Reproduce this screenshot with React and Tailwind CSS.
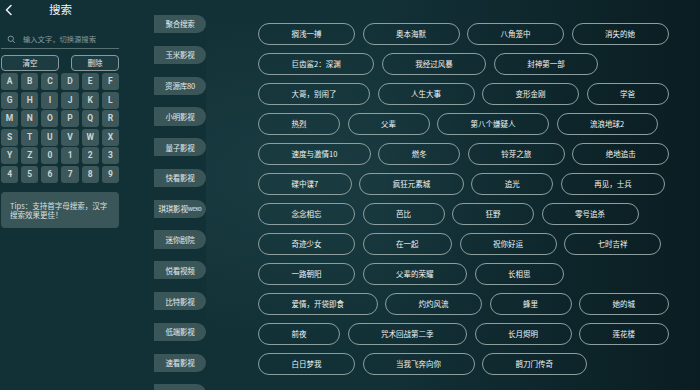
import React from "react";

const FONT = { fontFamily: '"Noto Sans CJK SC", "Noto Sans", sans-serif' };

const keys = "ABCDEFGHIJKLMNOPQRSTUVWXYZ0123456789".split("");

const sources = [
  "聚合搜索",
  "玉米影视",
  "资源库80",
  "小明影视",
  "量子影视",
  "快看影视",
  "琪琪影视wexo",
  "迷你剧院",
  "悦看视频",
  "比特影视",
  "低端影视",
  "速看影视",
  "",
];

const rows = [
  ["搁浅一搏", "奥本海默", "八角笼中", "消失的她"],
  ["巨齿鲨2：深渊", "我经过风暴", "封神第一部"],
  ["大哥，别闹了", "人生大事", "变形金刚", "学爸"],
  ["热烈", "父辈", "第八个嫌疑人", "流浪地球2"],
  ["速度与激情10", "燃冬", "铃芽之旅", "绝地追击"],
  ["碟中谍7", "疯狂元素城", "追光", "再见，士兵"],
  ["念念相忘", "芭比", "狂野", "零号追杀"],
  ["奇迹少女", "在一起", "祝你好运", "七时吉祥"],
  ["一路朝阳", "父辈的荣耀", "长相思"],
  ["爱情，开袋即食", "灼灼风流", "蜂里", "她的城"],
  ["前夜", "咒术回战第二季", "长月烬明", "莲花楼"],
  ["白日梦我", "当我飞奔向你", "鹊刀门传奇"],
];

function LeftPanel() {
  return (
    <div className="w-[118px] ml-[1px] shrink-0 flex flex-col">
      <div className="h-[20px] flex items-center relative">
        <svg width="10" height="12" viewBox="0 0 10 12" className="ml-[3px]">
          <polyline points="7,1.5 2.5,6 7,10.5" fill="none" stroke="#e8eeee" strokeWidth="1.6" strokeLinecap="round" strokeLinejoin="round" />
        </svg>
        <span className="ml-[35px] text-[11.5px] text-[#eef2f2]">搜索</span>
      </div>
      <div className="mt-[11px] h-[18px] flex items-center border-b border-[#587070]">
        <svg width="9" height="9" viewBox="0 0 10 10" className="ml-[6px]">
          <circle cx="4.2" cy="4.2" r="3" fill="none" stroke="#8a9c9c" strokeWidth="1" />
          <line x1="6.4" y1="6.4" x2="8.8" y2="8.8" stroke="#8a9c9c" strokeWidth="1" />
        </svg>
        <span className="ml-[7px] text-[7.3px] text-[#8a9c9c]">输入文字，切换源搜索</span>
      </div>
      <div className="mt-[6px] flex justify-between">
        <div className="w-[58px] h-[16px] rounded-[4px] border border-[#8a9a9a] bg-[#1c3c42] flex items-center justify-center text-[7.5px] text-[#e6eded]">清空</div>
        <div className="w-[48px] h-[16px] rounded-[4px] border border-[#8a9a9a] bg-[#1c3c42] flex items-center justify-center text-[7.5px] text-[#e6eded]">删除</div>
      </div>
      <div className="mt-[2px] grid grid-cols-6 gap-x-[3px] gap-y-[1.5px]">
        {keys.map((k) => (
          <div key={k} className="h-[17px] rounded-[3px] bg-[#3d585a] flex items-center justify-center text-[8.5px] font-bold text-[#ccd5d5]" style={{ fontFamily: '"Roboto", sans-serif' }}>
            {k}
          </div>
        ))}
      </div>
      <div className="mt-[9.5px] h-[36px] rounded-[4px] bg-[#3b5658] px-[9px] pt-[9px] text-[7.5px] leading-[9px] text-[#d9e1e1]">
        Tips：支持首字母搜索，汉字搜索效果更佳！
      </div>
    </div>
  );
}

function SourceList() {
  return (
    <div className="ml-[35px] w-[52px] shrink-0 pt-[15px] flex flex-col gap-[12.6px]">
      {sources.map((s, i) => (
        <div key={i} className="h-[18.2px] shrink-0 rounded-l-[3px] rounded-r-full bg-[#3b5658] flex items-center justify-center text-[7.5px] text-[#e4ebeb] whitespace-nowrap tracking-[-0.2px]">
          {s === "琪琪影视wexo" ? (
            <>
              琪琪影视<span className="text-[6px]">wexo</span>
            </>
          ) : (
            s
          )}
        </div>
      ))}
    </div>
  );
}

function Chips() {
  return (
    <div className="flex-1 relative pl-[52px] pt-[23px] flex flex-col gap-[8px]">
      <div className="absolute inset-0 pointer-events-none bg-[radial-gradient(ellipse_at_20%_45%,rgba(40,80,84,0.35),transparent_55%)]" />
      <div className="absolute inset-0 pointer-events-none bg-[linear-gradient(90deg,transparent_35%,rgba(6,18,22,0.65)_100%)]" />
      {rows.map((row, i) => (
        <div key={i} className="relative flex gap-[7.5px]">
          {row.map((t) => (
            <div key={t} className="h-[22px] px-[32.5px] rounded-full border-[1.5px] border-[#8d9e9e] flex items-center justify-center text-[7.5px] text-[#f0f4f4] whitespace-nowrap">
              {t}
            </div>
          ))}
        </div>
      ))}
    </div>
  );
}

export default function App() {
  return (
    <div className="w-[700px] h-[390px] overflow-hidden bg-[#123137] flex" style={FONT}>
      <LeftPanel />
      <SourceList />
      <Chips />
    </div>
  );
}
